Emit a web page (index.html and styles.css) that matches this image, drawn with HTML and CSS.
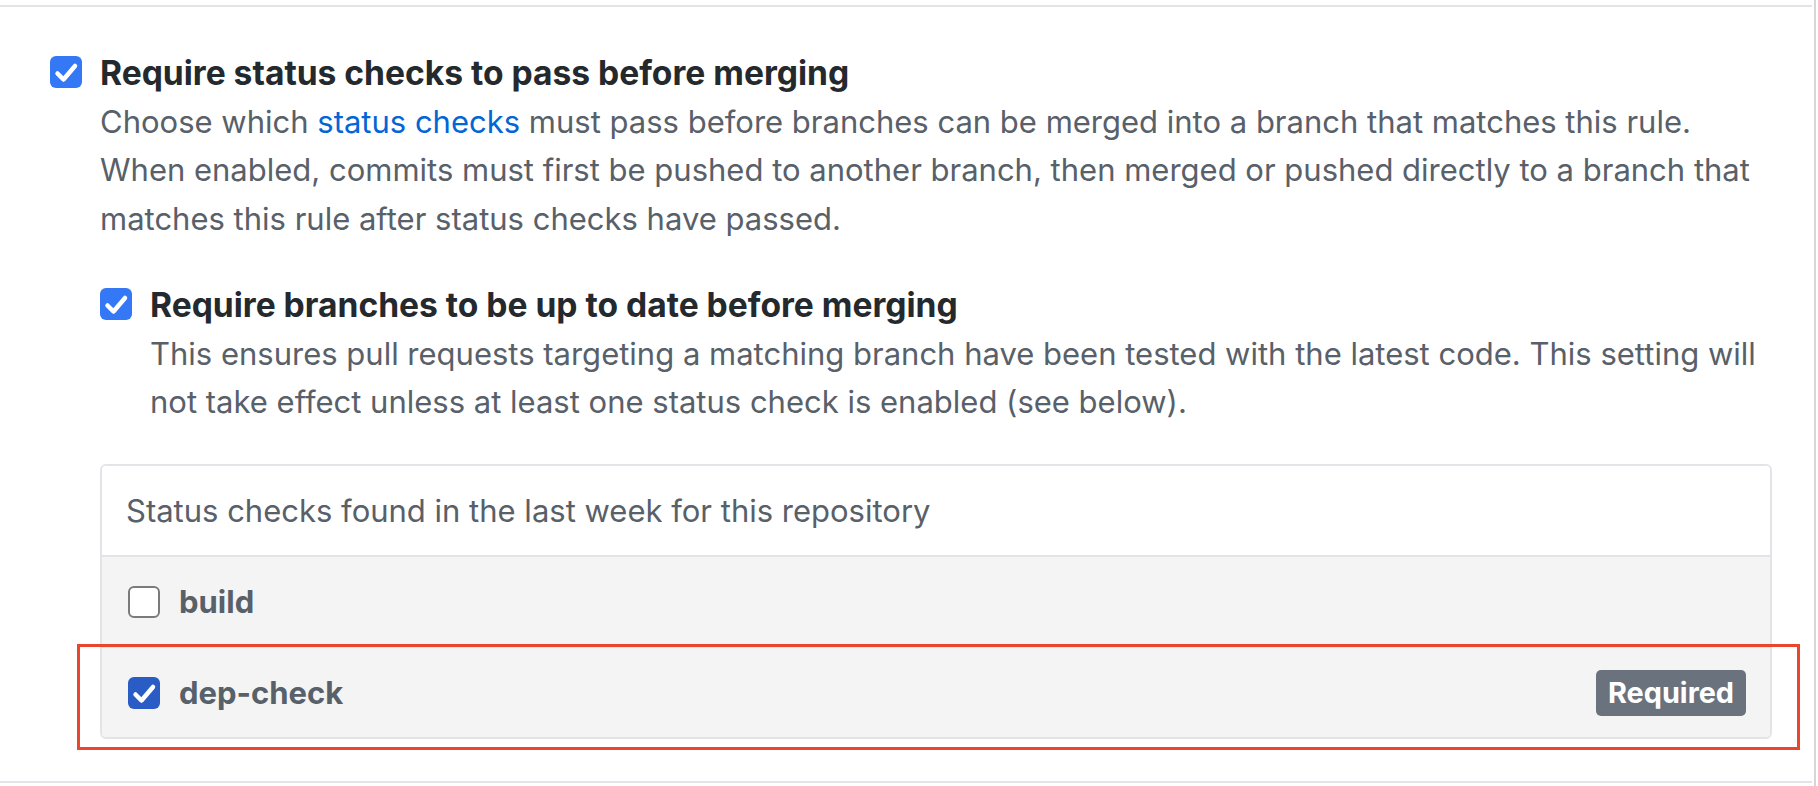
FILE: index.html
```html
<!DOCTYPE html>
<html lang="en">
<head>
<meta charset="utf-8">
<title>Branch protection rule</title>
<link rel="stylesheet" href="styles.css">
</head>
<body>
<div class="page">
  <div class="panel">
    <div class="rule">
      <span class="cb cb-on">
        <svg viewBox="0 0 32 32" width="32" height="32"><path d="M7.5 17.5 L13.5 23.5 L25 10" fill="none" stroke="#fff" stroke-width="4.5" stroke-linecap="round" stroke-linejoin="round"/></svg>
      </span>
      <div class="rule-body">
        <div class="rule-title">Require status checks to pass before merging</div>
        <p class="rule-desc">Choose which <a class="link" href="#">status checks</a> must pass before branches can be merged into a branch that matches this rule. When enabled, commits must first be pushed to another branch, then merged or pushed directly to a branch that matches this rule after status checks have passed.</p>

        <div class="rule rule-nested">
          <span class="cb cb-on">
            <svg viewBox="0 0 32 32" width="32" height="32"><path d="M7.5 17.5 L13.5 23.5 L25 10" fill="none" stroke="#fff" stroke-width="4.5" stroke-linecap="round" stroke-linejoin="round"/></svg>
          </span>
          <div class="rule-body">
            <div class="rule-title">Require branches to be up to date before merging</div>
            <p class="rule-desc">This ensures pull requests targeting a matching branch have been tested with the latest code. This setting will not take effect unless at least one status check is enabled (see below).</p>
          </div>
        </div>

        <div class="checks">
          <div class="checks-header">Status checks found in the last week for this repository</div>
          <div class="check-row">
            <span class="cb cb-off"></span>
            <span class="check-name">build</span>
          </div>
          <div class="check-row">
            <span class="cb cb-dark">
              <svg viewBox="0 0 32 32" width="32" height="32"><path d="M7.5 17.5 L13.5 23.5 L25 10" fill="none" stroke="#fff" stroke-width="4.5" stroke-linecap="round" stroke-linejoin="round"/></svg>
            </span>
            <span class="check-name">dep-check</span>
            <span class="badge">Required</span>
          </div>
        </div>
      </div>
    </div>
  </div>
  <div class="edge"></div>
</div>
<div class="annotation"></div>
</body>
</html>
```
FILE: styles.css
```css
html, body {
  margin: 0;
  padding: 0;
  background: #ffffff;
}

body {
  position: relative;
  width: 1818px;
  height: 786px;
  overflow: hidden;
  font-family: "Inter", "Liberation Sans", sans-serif;
  color: #586069;
}

.page {
  display: flex;
  align-items: stretch;
  height: 786px;
}

.panel {
  box-sizing: border-box;
  width: 1812px;
  margin-top: 5px;
  height: 778px;
  border-top: 2px solid #e4e4e8;
  border-bottom: 2px solid #e4e4e8;
  padding: 39.5px 40px 0 50px;
}

.edge {
  width: 2px;
  margin-left: 2px;
  background: #d6d6da;
}

.rule {
  display: grid;
  grid-template-columns: 32px 1fr;
  column-gap: 18px;
  align-items: start;
}

.rule-nested {
  margin-top: 35px;
}

.rule-body {
  min-width: 0;
}

.rule-title {
  font-size: 33.6px;
  font-weight: 700;
  line-height: 51px;
  color: #24292e;
}

.rule-desc {
  margin: 0;
  font-size: 31px;
  line-height: 48.7px;
  color: #586069;
}

.link {
  color: #0366d6;
  text-decoration: none;
}

.cb {
  box-sizing: border-box;
  display: flex;
  align-items: center;
  justify-content: center;
  flex: 0 0 32px;
  width: 32px;
  height: 32px;
  border-radius: 6px;
}

.rule > .cb {
  margin-top: 9.5px;
}

.cb svg {
  display: block;
}

.cb-on {
  background: #3478f6;
}

.cb-dark {
  background: #2a5cc5;
}

.cb-off {
  background: #ffffff;
  border: 2px solid #7b7b7e;
}

.checks {
  margin-top: 37px;
  border: 2px solid #e2e4e8;
  border-radius: 6px;
  overflow: hidden;
}

.checks-header {
  height: 89px;
  display: flex;
  align-items: center;
  padding-left: 24px;
  font-size: 31px;
  color: #586069;
  background: #ffffff;
}

.check-row {
  height: 89px;
  display: flex;
  align-items: center;
  gap: 19px;
  padding: 0 24px 0 26px;
  border-top: 2px solid #e4e4e6;
  background: #f4f4f4;
}

.check-name {
  font-size: 31px;
  font-weight: 700;
  color: #586069;
}

.badge {
  margin-left: auto;
  height: 46px;
  line-height: 46px;
  padding: 0 12px;
  border-radius: 5px;
  background: #6a737d;
  color: #ffffff;
  font-size: 28.8px;
  font-weight: 700;
}

.annotation {
  position: absolute;
  left: 77px;
  top: 644px;
  width: 1723px;
  height: 106px;
  box-sizing: border-box;
  border: 3px solid #ea452d;
  pointer-events: none;
}
```
